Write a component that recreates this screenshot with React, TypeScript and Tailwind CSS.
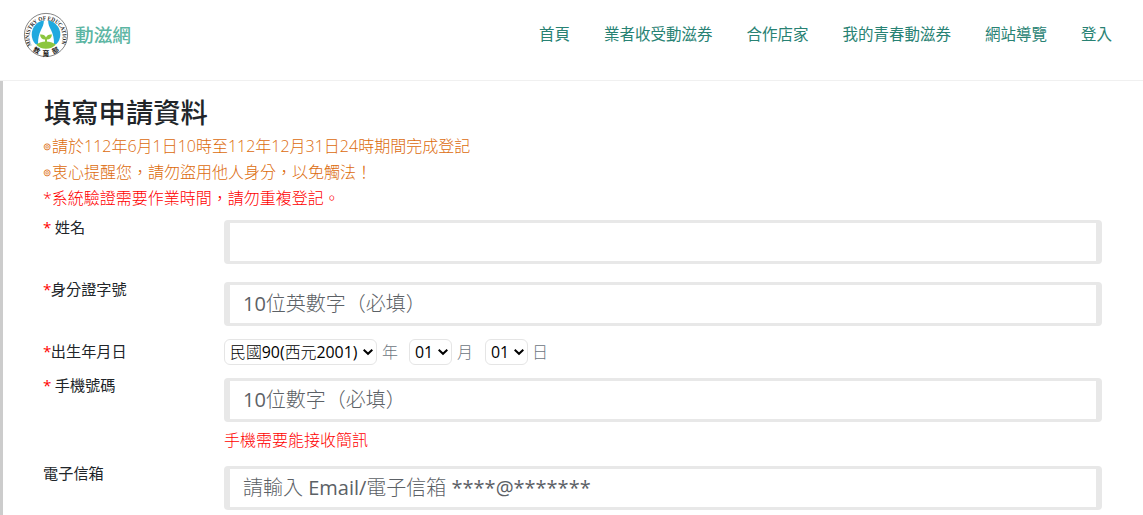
import type { ReactNode } from "react";

const navItems = [
  "首頁",
  "業者收受動滋券",
  "合作店家",
  "我的青春動滋券",
  "網站導覽",
  "登入",
];

// the three characters at the bottom of the ring
const ringChars = [
  { char: "教", x: 13.8, y: 38, angle: 28 },
  { char: "育", x: 23, y: 40.6, angle: 0 },
  { char: "部", x: 32.2, y: 38, angle: -28 },
];

function Logo() {
  return (
    <svg width="46" height="46" viewBox="0 0 46 46">
      <defs>
        <path id="ringTop" d="M8.600 33.400 A16.7 16.7 0 1 1 37.400 33.400" />
        <clipPath id="emblem">
          <circle cx="23" cy="22.500" r="14.300" />
        </clipPath>
      </defs>
      <circle cx="23" cy="23" r="21.6" fill="#fff" stroke="#666" strokeWidth="0.8" />
      <g clipPath="url(#emblem)">
        <path d="M8 7H20.500C21.500 11 20 14 18 18C16 22 15 26 15 32L6 34Z" fill="#1fa9df" />
        <path d="M38 7H25.500C24.500 11 26 14 28 18C30 22 31 26 31 32L40 34Z" fill="#1fa9df" />
        <path d="M12 34C15 30.500 19 29.500 23 29.500S31 30.500 34 34V38H12Z" fill="#8cc63f" />
        <path
          d="M22 31V27.500C19 27.500 17.500 26 17 22.500C20 22 22 23 23 25.500C24 23 26 22 29 22.500C28.500 26 27 27.500 24 27.500V31Z"
          fill="#8cc63f"
        />
      </g>
      <text
        fill="#222"
        fontSize="6"
        fontWeight="700"
        fontFamily="Liberation Serif, serif"
      >
        <textPath href="#ringTop" textLength="68" lengthAdjust="spacingAndGlyphs">
          MINISTRY OF EDUCATION
        </textPath>
      </text>
      {ringChars.map(({ char, x, y, angle }) => (
        <text
          key={char}
          x={x}
          y={y}
          transform={`rotate(${angle} ${x} ${y})`}
          textAnchor="middle"
          dominantBaseline="central"
          fill="#222"
          fontSize="6.8"
          fontWeight="700"
          fontFamily="Noto Sans CJK TC, sans-serif"
        >
          {char}
        </text>
      ))}
    </svg>
  );
}

function Label({ required, children }: { required?: boolean; children: ReactNode }) {
  return (
    <label className="-mt-px h-4 w-[181px] shrink-0 text-[15.2px] leading-4 text-[#212529]">
      {required && <span className="mr-[-0.6px] text-[#ff0000]">*</span>}
      {children}
    </label>
  );
}

function Field({ placeholder }: { placeholder?: string }) {
  return (
    <input
      type="text"
      placeholder={placeholder}
      className="block h-11 w-full rounded-[4px] border-x-[6px] border-y-[3px] border-[#e8e8e8] bg-white px-[13px] pb-[2px] font-['Open_Sans','Noto_Sans_CJK_TC_Light','Noto_Sans_CJK_TC',sans-serif] text-[20px] text-[#495057] placeholder:text-[#5c6166] outline-none"
    />
  );
}

function Select({ value, className }: { value: string; className: string }) {
  return (
    <div className={`grid h-[26px] items-center ${className}`}>
      <select
        defaultValue={value}
        className="col-start-1 row-start-1 h-[26px] w-full appearance-none rounded-[6px] border border-[#e5e5e5] bg-white pl-[5px] font-['Open_Sans','Noto_Sans_CJK_TC_Light','Noto_Sans_CJK_TC',sans-serif] text-[15.9px] leading-6 font-normal text-black"
      >
        <option value={value}>{value}</option>
      </select>
      <svg
        className="pointer-events-none col-start-1 row-start-1 mr-[4px] justify-self-end"
        width="10"
        height="8"
        viewBox="0 0 10 8"
        fill="none"
        stroke="#000"
        strokeWidth="2"
      >
        <path d="M0.700 1.800L5 5.800L9.300 1.800" />
      </svg>
    </div>
  );
}

function Bullet() {
  return (
    <span className="inline-flex h-4 w-[9px] items-center align-[2px] text-[10px] leading-4 font-normal">
      ⊚
    </span>
  );
}

export default function App() {
  return (
    <div
      className="flex h-[515px] flex-col overflow-hidden bg-white font-['Open_Sans','Noto_Sans_CJK_TC',sans-serif]"
      lang="zh-Hant"
    >
      <header className="flex h-[81px] shrink-0 items-start justify-between border-b border-[#f0f0f0] pr-[31px] pl-[23px]">
        <div className="flex items-center gap-[6px] pt-3">
          <Logo />
          <span className="text-[18.7px] font-medium text-[#5bb5a2]">動滋網</span>
        </div>
        <nav className="flex gap-[34px] pt-[22px] text-[15.5px] leading-6 text-[#288273]">
          {navItems.map((item) => (
            <a key={item} href="#">
              {item}
            </a>
          ))}
        </nav>
      </header>

      <main className="flex-1 border-l-[3px] border-[#ccc] pt-[14px] pr-[41px] pl-10">
        <h1 className="mb-[2px] ml-px text-[27.3px] leading-9 font-medium text-[#212529]">
          填寫申請資料
        </h1>
        <div className="text-[16px] leading-[26px] font-light">
          <p className="h-[26px] text-[#dc6b0c]">
            <Bullet />
            請於112年6月1日10時至112年12月31日24時期間完成登記
          </p>
          <p className="h-[26px] text-[#dc6b0c]">
            <Bullet />
            衷心提醒您，請勿盜用他人身分，以免觸法！
          </p>
          <p className="text-[#ff0000]">*系統驗證需要作業時間，請勿重複登記。</p>
        </div>

        <form className="pt-[9px]">
          <div className="mb-[18px] flex">
            <Label required> 姓名</Label>
            <Field />
          </div>
          <div className="mb-[13px] flex">
            <Label required>身分證字號</Label>
            <Field placeholder="10位英數字（必填）" />
          </div>
          <div className="mb-[13px] flex">
            <div className="flex pt-[5px]">
              <Label required>出生年月日</Label>
            </div>
            <div className="flex h-[26px] items-center text-[16px] leading-[26px] font-light text-[#6c757d]">
              <Select value="民國90(西元2001)" className="w-[153px]" />
              <span className="mr-[11px] ml-[5px]">年</span>
              <Select value="01" className="w-[43px]" />
              <span className="mr-[12px] ml-[5px]">月</span>
              <Select value="01" className="w-[43px]" />
              <span className="ml-[4px]">日</span>
            </div>
          </div>
          <div className="flex">
            <Label required> 手機號碼</Label>
            <div className="w-full">
              <Field placeholder="10位數字（必填）" />
              <p className="pt-[5px] pb-[13px] text-[16px] leading-[26px] font-light text-[#ff0000]">
                手機需要能接收簡訊
              </p>
            </div>
          </div>
          <div className="flex">
            <Label>電子信箱</Label>
            <Field placeholder="請輸入 Email/電子信箱 ****@*******" />
          </div>
        </form>
      </main>
    </div>
  );
}
